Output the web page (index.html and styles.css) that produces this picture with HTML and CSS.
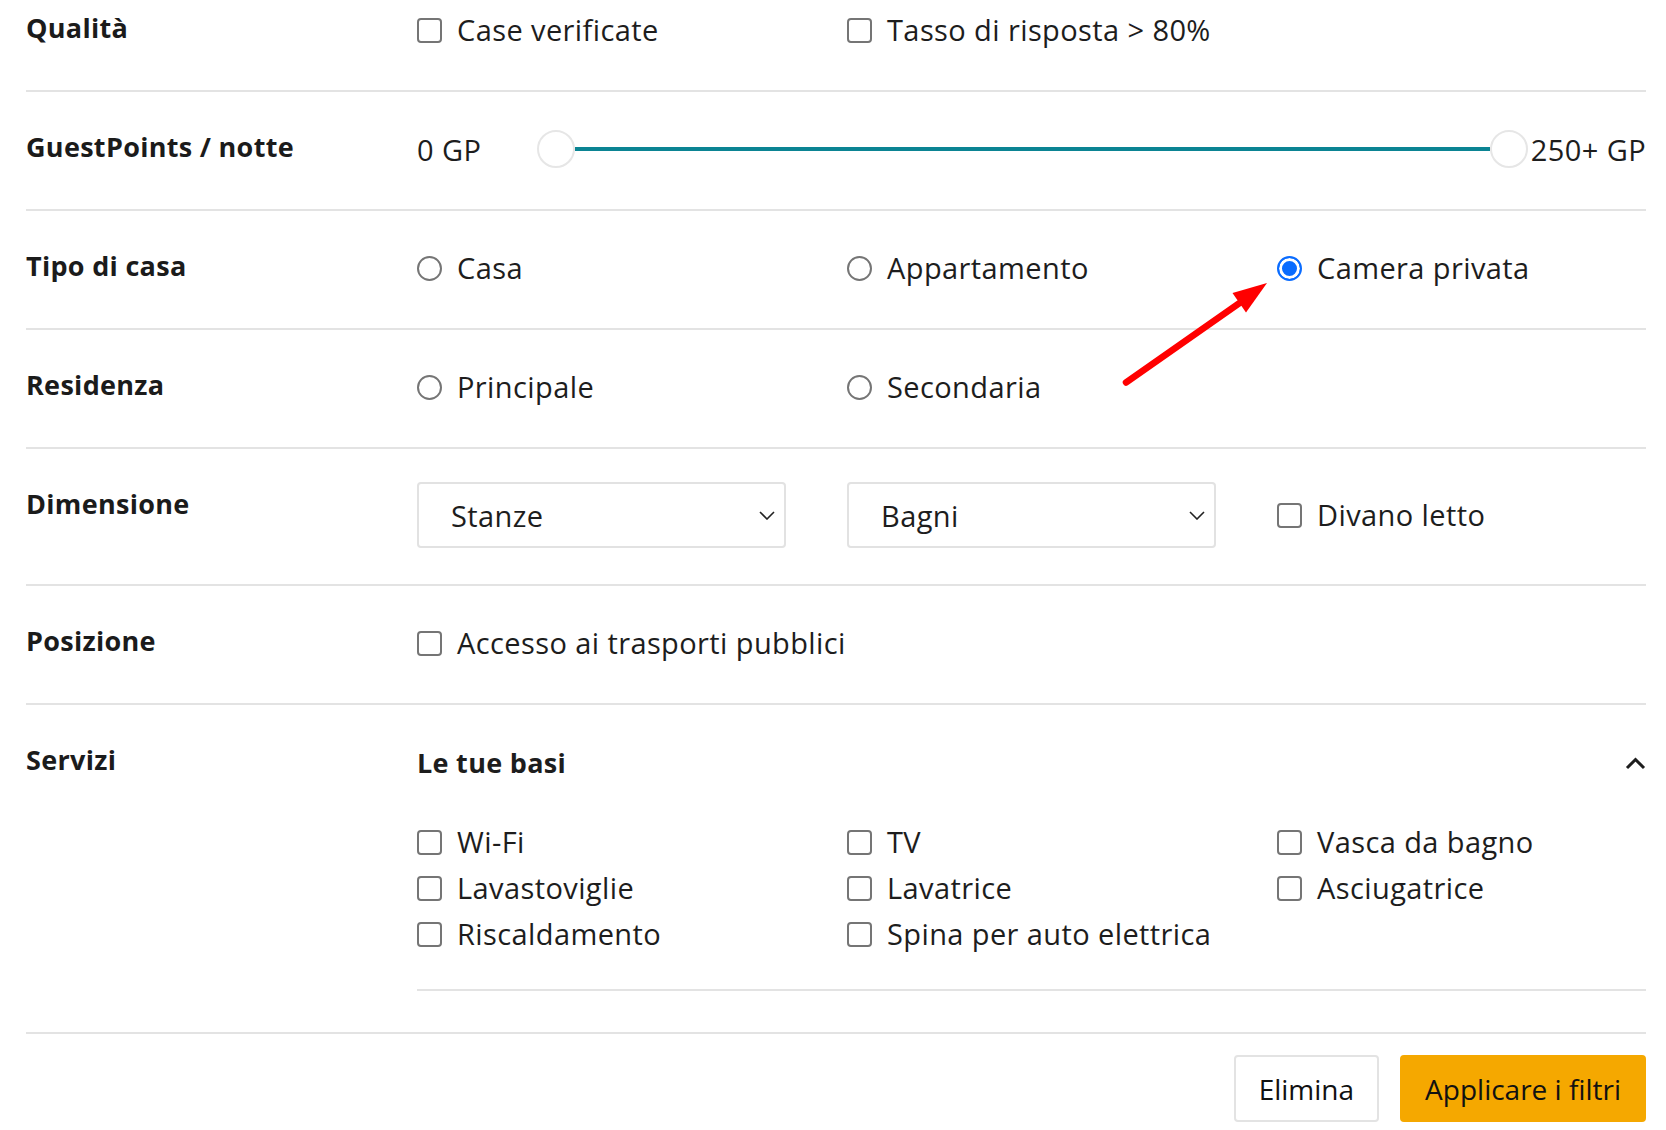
FILE: index.html
```html
<!DOCTYPE html>
<html lang="it">
<head>
<meta charset="utf-8">
<title>Filtri</title>
<link rel="stylesheet" href="styles.css">
</head>
<body>
<div class="page">
  <div class="filters">
    <div class="row row-first">
      <div class="label">Qualità</div>
      <div class="options">
        <label class="opt"><span class="box"></span>Case verificate</label>
        <label class="opt"><span class="box"></span>Tasso di risposta &gt; 80%</label>
      </div>
    </div>

    <div class="row">
      <div class="label">GuestPoints / notte</div>
      <div class="range">
        <span class="range-min">0 GP</span>
        <span class="thumb"></span>
        <span class="track"></span>
        <span class="thumb"></span>
        <span class="range-max">250+ GP</span>
      </div>
    </div>

    <div class="row">
      <div class="label">Tipo di casa</div>
      <div class="options">
        <label class="opt"><span class="box radio"></span>Casa</label>
        <label class="opt"><span class="box radio"></span>Appartamento</label>
        <label class="opt"><span class="box radio radio-on"></span>Camera privata</label>
      </div>
    </div>

    <div class="row">
      <div class="label">Residenza</div>
      <div class="options">
        <label class="opt"><span class="box radio"></span>Principale</label>
        <label class="opt"><span class="box radio"></span>Secondaria</label>
      </div>
    </div>

    <div class="row">
      <div class="label">Dimensione</div>
      <div class="options">
        <div class="select"><span>Stanze</span>
          <svg class="chev" width="16" height="9" viewBox="0 0 16 9"><path d="M1 1 L8 8 L15 1" fill="none" stroke="#222" stroke-width="1.6"/></svg>
        </div>
        <div class="select"><span>Bagni</span>
          <svg class="chev" width="16" height="9" viewBox="0 0 16 9"><path d="M1 1 L8 8 L15 1" fill="none" stroke="#222" stroke-width="1.6"/></svg>
        </div>
        <label class="opt"><span class="box"></span>Divano letto</label>
      </div>
    </div>

    <div class="row">
      <div class="label">Posizione</div>
      <div class="options">
        <label class="opt opt-wide"><span class="box"></span>Accesso ai trasporti pubblici</label>
      </div>
    </div>

    <div class="row row-services">
      <div class="label">Servizi</div>
      <div class="services">
        <div class="svc-head">
          <span>Le tue basi</span>
          <svg width="21" height="13" viewBox="0 0 21 13"><path d="M2 11 L10.5 2.5 L19 11" fill="none" stroke="#1d1d1d" stroke-width="3"/></svg>
        </div>
        <div class="amenities">
          <label class="opt"><span class="box"></span>Wi-Fi</label>
          <label class="opt"><span class="box"></span>TV</label>
          <label class="opt"><span class="box"></span>Vasca da bagno</label>
          <label class="opt"><span class="box"></span>Lavastoviglie</label>
          <label class="opt"><span class="box"></span>Lavatrice</label>
          <label class="opt"><span class="box"></span>Asciugatrice</label>
          <label class="opt"><span class="box"></span>Riscaldamento</label>
          <label class="opt"><span class="box"></span>Spina per auto elettrica</label>
        </div>
      </div>
    </div>

    <div class="actions">
      <button class="btn btn-clear" type="button">Elimina</button>
      <button class="btn btn-apply" type="button">Applicare i filtri</button>
    </div>
  </div>

  <svg class="arrow" width="1666" height="1130" viewBox="0 0 1666 1130">
    <line x1="1126" y1="382.5" x2="1241" y2="302" stroke="#ff0000" stroke-width="6.5" stroke-linecap="round"/>
    <polygon points="1267,283 1232.5,293 1246,312.5" fill="#ff0000"/>
  </svg>
</div>
</body>
</html>
```

FILE: styles.css
```css
html, body {
  margin: 0;
  padding: 0;
  background: #ffffff;
}

body {
  color: #1d1d1d;
  font-family: "Open Sans", "Noto Sans", sans-serif;
}

.page {
  position: relative;
  width: 1666px;
  height: 1130px;
  overflow: hidden;
  box-sizing: border-box;
  padding: 0 20px 0 26px;
}

.row {
  display: grid;
  grid-template-columns: 391px 1229px;
  padding: 33px 0 36px;
  border-bottom: 2px solid #e3e3e3;
}

.row-first {
  padding-top: 6px;
}

.row-services {
  padding-bottom: 41px;
}

.label {
  font-weight: 700;
  font-size: 27px;
  letter-spacing: 0.3px;
  line-height: 44px;
  color: #1b1b1b;
}

.options {
  display: grid;
  grid-template-columns: repeat(3, 369px);
  column-gap: 61px;
  align-items: center;
}

.opt {
  display: flex;
  align-items: center;
  gap: 15px;
  font-size: 29px;
  letter-spacing: 0.4px;
  line-height: 48px;
  white-space: nowrap;
}

.opt-wide {
  grid-column: span 2;
}

.box {
  flex: none;
  width: 25px;
  height: 25px;
  box-sizing: border-box;
  border: 2px solid #757575;
  border-radius: 4px;
  background: #fff;
}

.radio {
  border-radius: 50%;
}

.radio-on {
  border: 2.5px solid #0a6cff;
  background: #0a6cff;
  box-shadow: inset 0 0 0 3px #ffffff;
}

.range {
  display: flex;
  align-items: center;
  height: 48px;
  font-size: 29px;
  letter-spacing: 0.4px;
}

.range-min {
  width: 120px;
  flex: none;
}

.thumb {
  flex: none;
  width: 38px;
  height: 38px;
  box-sizing: border-box;
  border: 2px solid #e6e6e6;
  border-radius: 50%;
  background: #fff;
}

.track {
  flex: 1;
  height: 4px;
  background: #0b8493;
}

.range-max {
  margin-left: 3px;
  white-space: nowrap;
}

.select {
  height: 66px;
  box-sizing: border-box;
  border: 2px solid #e2e2e2;
  border-radius: 4px;
  display: flex;
  align-items: center;
  justify-content: space-between;
  padding: 0 9px 0 32px;
  font-size: 29px;
  letter-spacing: 0.4px;
}

.chev {
  display: block;
}

.services {
  display: flex;
  flex-direction: column;
}

.svc-head {
  display: flex;
  justify-content: space-between;
  align-items: center;
  height: 48px;
  font-weight: 700;
  font-size: 27px;
  letter-spacing: 0.3px;
}

.svc-head svg {
  display: block;
  margin-top: 2px;
}

.amenities {
  display: grid;
  grid-template-columns: repeat(3, 369px);
  column-gap: 61px;
  grid-auto-rows: 46px;
  align-items: center;
  margin-top: 33px;
  padding-bottom: 32px;
  border-bottom: 2px solid #e3e3e3;
}

.amenities .opt {
  line-height: 46px;
}

.actions {
  display: flex;
  justify-content: flex-end;
  gap: 21px;
  margin-top: 21px;
}

.btn {
  height: 67px;
  box-sizing: border-box;
  border-radius: 4px;
  font-family: inherit;
  font-size: 28px;
  color: #111;
  padding: 0 23px;
  cursor: pointer;
}

.btn-clear {
  background: #fff;
  border: 2px solid #e3e3e3;
}

.btn-apply {
  background: #f5a800;
  border: 2px solid #f5a800;
}

.arrow {
  position: absolute;
  left: 0;
  top: 0;
  pointer-events: none;
}
```
